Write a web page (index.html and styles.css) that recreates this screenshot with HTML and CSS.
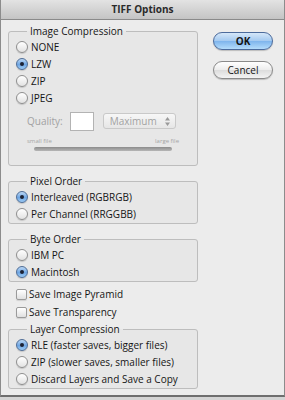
FILE: index.html
```html
<!DOCTYPE html>
<html lang="en">
<head>
    <meta charset="UTF-8">
    <meta name="viewport" content="width=device-width, initial-scale=1.0">
    <title>TIFF Options</title>
    <link rel="stylesheet" href="styles.css">
</head>
<body>
    <div class="window">
        <div class="titlebar">TIFF Options</div>
        <div class="content">
            <div class="left">
                <fieldset class="group">
                    <legend>Image Compression</legend>
                    <div class="row"><span class="radio"></span>NONE</div>
                    <div class="row"><span class="radio on"></span>LZW</div>
                    <div class="row"><span class="radio"></span>ZIP</div>
                    <div class="row"><span class="radio"></span>JPEG</div>
                    <div class="quality">
                        <span class="dim">Quality:</span>
                        <span class="field"></span>
                        <span class="select">Maximum
                            <svg class="arrows" width="5" height="9" viewBox="0 0 5 9">
                                <path d="M2.5 0 L5 3.5 L0 3.5 Z M2.5 9 L5 5.5 L0 5.5 Z" fill="#9a9a9a"/>
                            </svg>
                        </span>
                    </div>
                    <div class="scale">
                        <span>small file</span>
                        <span>large file</span>
                    </div>
                    <div class="track"></div>
                </fieldset>

                <fieldset class="group">
                    <legend>Pixel Order</legend>
                    <div class="row"><span class="radio on"></span>Interleaved (RGBRGB)</div>
                    <div class="row"><span class="radio"></span>Per Channel (RRGGBB)</div>
                </fieldset>

                <fieldset class="group">
                    <legend>Byte Order</legend>
                    <div class="row"><span class="radio"></span>IBM PC</div>
                    <div class="row"><span class="radio on"></span>Macintosh</div>
                </fieldset>

                <div class="checks">
                    <div class="crow"><span class="check"></span>Save Image Pyramid</div>
                    <div class="crow"><span class="check"></span>Save Transparency</div>
                </div>

                <fieldset class="group last">
                    <legend>Layer Compression</legend>
                    <div class="row"><span class="radio on"></span>RLE (faster saves, bigger files)</div>
                    <div class="row"><span class="radio"></span>ZIP (slower saves, smaller files)</div>
                    <div class="row"><span class="radio"></span>Discard Layers and Save a Copy</div>
                </fieldset>
            </div>

            <div class="buttons">
                <button class="btn ok">OK</button>
                <button class="btn">Cancel</button>
            </div>
        </div>
    </div>
</body>
</html>
```

FILE: styles.css
```css
body {
    margin: 0;
    background-color: #d4d4d4;
    font-family: "Open Sans", "DejaVu Sans", sans-serif;
    font-size: 10px;
    color: #151515;
}

.window {
    width: 285px;
    height: 397px;
    box-sizing: border-box;
    background-color: #ececec;
    border-left: 1px solid #8c8c8c;
    border-right: 1px solid #8c8c8c;
    border-bottom: 2px solid #6e6e6e;
}

.titlebar {
    height: 19px;
    line-height: 19px;
    text-align: center;
    font-weight: bold;
    color: #2a2a2a;
    background: linear-gradient(#e3e3e3, #c4c4c4);
    border-bottom: 1px solid #8a8a8a;
}

.content {
    display: flex;
    padding: 5px 0 0 7px;
}

.left {
    width: 190px;
}

.group {
    margin: 0 0 9px 0;
    padding: 0 4px 1px 7px;
    border: 1px solid #bdbdbd;
    border-radius: 3px;
    background-color: #e7e7e7;
}

.group legend {
    margin-left: 11px;
    padding: 0 3px;
    line-height: 13px;
}

.group.last {
    margin-bottom: 0;
}

.row {
    display: flex;
    align-items: center;
    height: 17px;
}

.radio {
    width: 12px;
    height: 12px;
    box-sizing: border-box;
    margin-right: 3px;
    border-radius: 50%;
    border: 1px solid #8f8f8f;
    background: linear-gradient(#ffffff, #e2e2e2);
    box-shadow: 0 1px 1px rgba(0, 0, 0, 0.15);
    display: flex;
    align-items: center;
    justify-content: center;
}

.radio.on {
    border-color: #4f6d96;
    background: linear-gradient(#bcd8f5, #6fa6e3 55%, #9ccbf5);
}

.radio.on::after {
    content: "";
    width: 4px;
    height: 4px;
    border-radius: 50%;
    background-color: #1c2233;
}

.quality {
    display: flex;
    align-items: center;
    height: 20px;
    margin: 5px 0 0 11px;
}

.dim {
    color: #a2a2a2;
}

.field {
    width: 24px;
    height: 19px;
    box-sizing: border-box;
    margin-left: 7px;
    background-color: #fff;
    border: 1px solid #b3b3b3;
}

.select {
    display: flex;
    align-items: center;
    justify-content: space-between;
    width: 73px;
    height: 16px;
    box-sizing: border-box;
    margin-left: 9px;
    padding: 0 5px 0 6px;
    color: #a2a2a2;
    border: 1px solid #c9c9c9;
    border-radius: 3px;
    background: linear-gradient(#f7f7f7, #e6e6e6);
}

.scale {
    display: flex;
    justify-content: space-between;
    width: 152px;
    margin: 6px 0 0 11px;
    font-size: 6px;
    line-height: 8px;
    color: #a5a5a5;
}

.track {
    width: 138px;
    height: 4px;
    margin: 2px 0 13px 18px;
    border-radius: 2px;
    background: linear-gradient(#8c8c8c, #b6b6b6);
}

.checks {
    margin: -6px 0 2px 8px;
}

.crow {
    display: flex;
    align-items: center;
    height: 18px;
}

.check {
    width: 11px;
    height: 11px;
    box-sizing: border-box;
    margin-right: 2px;
    border: 1px solid #9a9a9a;
    border-radius: 2px;
    background: linear-gradient(#ffffff, #e0e0e0);
    box-shadow: 0 1px 1px rgba(0, 0, 0, 0.12);
}

.buttons {
    display: flex;
    flex-direction: column;
    gap: 11px;
    margin: 7px 0 0 15px;
}

.btn {
    width: 60px;
    height: 18px;
    padding: 0;
    font-family: "Open Sans", "DejaVu Sans", sans-serif;
    font-size: 10px;
    color: #151515;
    border: 1px solid #8a8a8a;
    border-radius: 9px;
    background: linear-gradient(#ffffff, #ececec 50%, #dcdcdc 51%, #f3f3f3);
    box-shadow: 0 1px 1px rgba(0, 0, 0, 0.2);
}

.btn.ok {
    font-weight: bold;
    border-color: #4c6b9c;
    background: linear-gradient(#d5e7f9, #a3c9f0 50%, #7eb4ec 51%, #b4dcfb);
}
```
